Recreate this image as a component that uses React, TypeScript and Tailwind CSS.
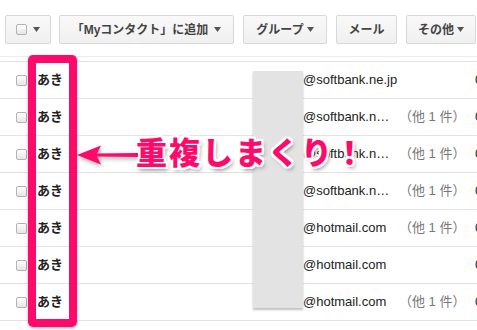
import React from "react";

/* ── Data ── */

interface ContactRow {
  name: string;
  email: string;
  extra?: string;
}

const ROWS: ContactRow[] = [
  { name: "あき", email: "@softbank.ne.jp" },
  { name: "あき", email: "@softbank.n…", extra: "（他 1 件）" },
  { name: "あき", email: "@softbank.n…", extra: "（他 1 件）" },
  { name: "あき", email: "@softbank.n…", extra: "（他 1 件）" },
  { name: "あき", email: "@hotmail.com", extra: "（他 1 件）" },
  { name: "あき", email: "@hotmail.com" },
  { name: "あき", email: "@hotmail.com", extra: "（他 1 件）" },
];

const PINK = "#fe0a6b";

/* ── Small pieces ── */

function Check() {
  return (
    <span className="block h-[11px] w-[11px] shrink-0 rounded-[2px] border border-[#b3b3b3] bg-gradient-to-b from-white to-[#e6e6e6]" />
  );
}

function Caret() {
  return (
    <svg width="7" height="5" viewBox="0 0 7 5" className="shrink-0">
      <path d="M0 0h7L3.5 5z" fill="#555" />
    </svg>
  );
}

function ToolButton({
  children,
  className,
}: {
  children: React.ReactNode;
  className: string;
}) {
  return (
    <div
      className={`flex h-[29px] shrink-0 items-center justify-center rounded-[2px] border border-[#d8d8d8] bg-gradient-to-b from-[#f9f9f9] to-[#f0f0f0] text-[12px] font-bold text-[#444] ${className}`}
    >
      {children}
    </div>
  );
}

/* ── Main ── */

export default function App() {
  return (
    <div className="relative h-[330px] w-[477px] overflow-hidden bg-white font-['Liberation_Sans','Noto_Sans_CJK_JP',sans-serif]">
      {/* Toolbar */}
      <div className="flex h-[57px] border-b border-[#ececec] pl-[5px] pt-[15px]">
        <ToolButton className="w-[46px] gap-[6px]">
          <Check />
          <Caret />
        </ToolButton>
        <ToolButton className="ml-[8px] w-[175px] gap-[6px]">
          「Myコンタクト」に追加
          <Caret />
        </ToolButton>
        <ToolButton className="ml-[9px] w-[84px] gap-[3px]">
          グループ
          <Caret />
        </ToolButton>
        <ToolButton className="ml-[9px] w-[61px]">メール</ToolButton>
        <ToolButton className="ml-[9px] w-[70px] gap-[3px]">
          その他
          <Caret />
        </ToolButton>
      </div>

      {/* Rows */}
      <div className="mt-[4px] border-b border-[#e3e3e3]">
        {ROWS.map((row, i) => (
          <div
            key={i}
            className="flex h-[37px] items-center border-t border-[#e3e3e3] pl-[16px] text-[13px] text-[#222]"
          >
            <Check />
            <span className="ml-[10px] w-[266px] shrink-0 font-bold">{row.name}</span>
            <span className="w-[96px] shrink-0 whitespace-nowrap">{row.email}</span>
            <span className="w-[76px] shrink-0 whitespace-nowrap text-[#777]">{row.extra}</span>
            <span className="whitespace-nowrap">0</span>
          </div>
        ))}
      </div>

      {/* Redaction block */}
      <div className="absolute left-[253px] top-[71px] h-[237px] w-[50px] bg-[#e3e3e3] shadow-[0_2px_2px_rgba(0,0,0,0.25)]" />

      {/* Highlight box */}
      <div className="absolute left-[28px] top-[55px] h-[272px] w-[49px] rounded-[5px] border-[8px] border-[#fe0a6b] shadow-[0_1px_3px_rgba(0,0,0,0.3)]" />

      {/* Arrow */}
      <svg
        className="absolute left-[74px] top-[142px] drop-shadow-[1px_2px_2px_rgba(0,0,0,0.35)]"
        width="66"
        height="26"
        viewBox="0 0 66 26"
      >
        <path d="M3 13 L27 3.5 L23 11.5 L64 11 L64 15 L23 14.5 L27 22.5 Z" fill={PINK} />
      </svg>

      {/* Callout */}
      <div className="absolute left-[136px] top-[135px] whitespace-nowrap font-['Noto_Sans_CJK_JP',sans-serif] text-[31px] font-black leading-none tracking-[2px] text-[#fe0a6b] [text-shadow:-2px_-2px_0_#fff,2px_-2px_0_#fff,-2px_2px_0_#fff,2px_2px_0_#fff,0_-2px_0_#fff,0_2px_0_#fff,-2px_0_0_#fff,2px_0_0_#fff,2px_3px_4px_rgba(0,0,0,0.5)]">
        重複しまくり！
      </div>
    </div>
  );
}
